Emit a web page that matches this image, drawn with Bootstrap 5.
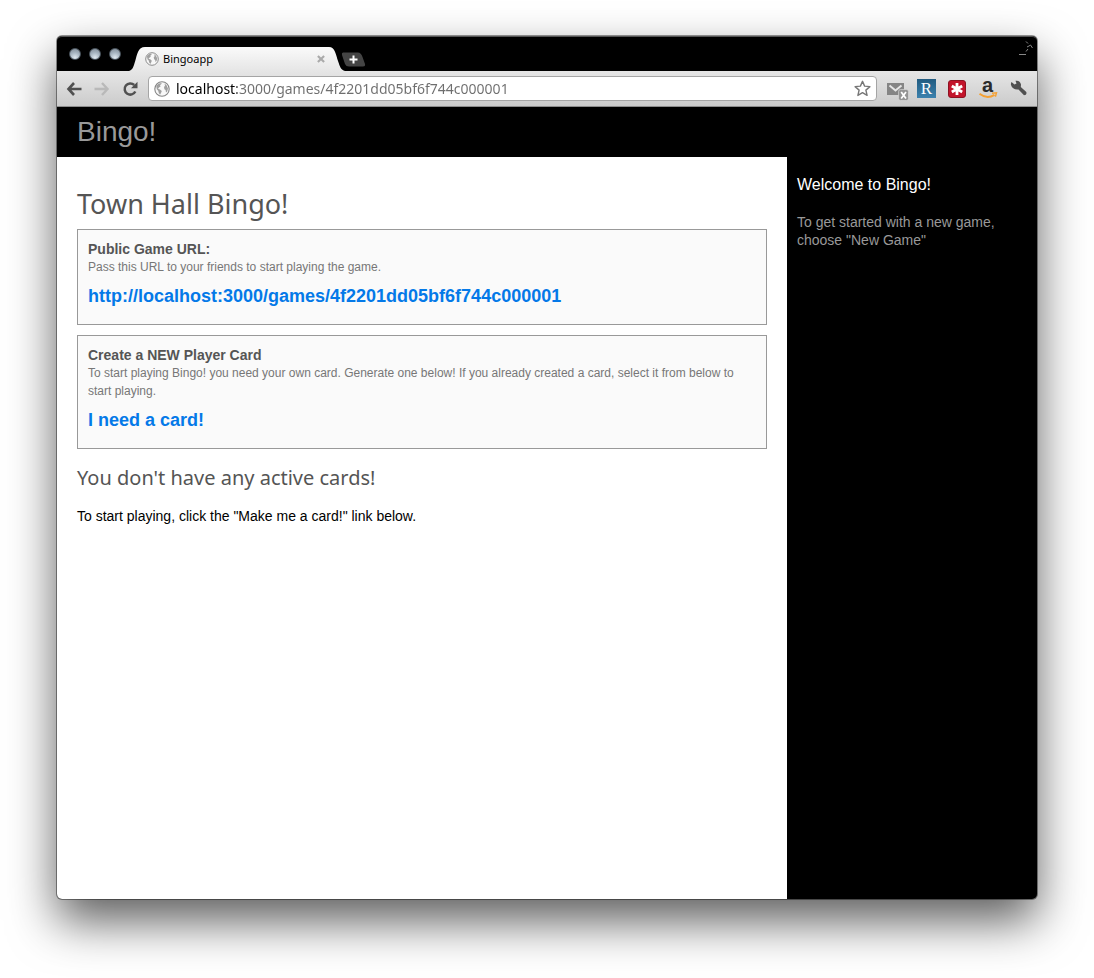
<!DOCTYPE html>
<html lang="en">
<head>
<meta charset="utf-8">
<meta name="viewport" content="width=device-width, initial-scale=1">
<title>Bingoapp</title>
<link rel="stylesheet" href="https://cdn.jsdelivr.net/npm/bootstrap@5.3.0/dist/css/bootstrap.min.css">
<style>
:root { --ui: "Noto Sans", "Open Sans", sans-serif; --helv: "Liberation Sans", Arial, sans-serif; }
body { font-family: var(--helv); font-size: 14px; line-height: 18px; color: #000; background: #fff; }
.desk { min-height: 100vh; padding: 36px 57px 79px; }
.app-window { border-radius: 5px; background: #000; box-shadow: 0 0 0 1px rgba(0,0,0,.4), 0 22px 48px rgba(0,0,0,.64); }

/* tab strip */
.tab-strip { height: 35px; background: #000; font-family: var(--ui); border-top: 1px solid #555; border-radius: 5px 5px 0 0; }
.light { width: 12px; height: 12px; border-radius: 50%; background: radial-gradient(circle at 50% 85%, #dfe9f0 0, #a6b4c0 50%, #7d8994 100%); border: 1px solid #4a545d; }
.tab-body { width: 180px; height: 24px; background: linear-gradient(#fafafa, #e6e6e6); font-size: 11px; line-height: 24px; }
.icon-btn { padding: 0; border: 0; background: none; display: flex; align-items: center; justify-content: center; }

/* toolbar */
.toolbar { height: 36px; background: linear-gradient(#e6e6e6, #cbcbcb); border-bottom: 1px solid #8c8c8c; padding: 0 9px; }
.address { height: 25px; border: 1px solid #a5a5a5; border-radius: 4px; background: #fff; padding: 0 5px; margin: 0 10px 0 9px; }
.address input { border: 0; outline: 0; padding: 0; margin-left: 6px; height: 21px; font-family: var(--ui); font-size: 14px;
  color: #6e6e6e; -webkit-text-fill-color: transparent; background: linear-gradient(90deg, #000 61px, #6e6e6e 61px); -webkit-background-clip: text; background-clip: text; }

/* page */
.masthead { height: 50px; padding: 0 20px; }
.masthead a { color: #999; font-size: 28px; line-height: 50px; }
.game { background: #fff; padding: 30px 20px; border-radius: 0 0 0 5px; }
.game h1, .game h2 { font-family: var(--ui); font-weight: 400; color: #555; margin: 0; }
.game h1 { font-size: 27px; line-height: 34px; margin-bottom: 8px; }
.game h2 { font-size: 20px; line-height: 30px; margin: 14px 0; }
.panel { background: #fafafa; border: 1px solid #999; padding: 10px 10px 18px; margin-bottom: 10px; }
.panel h3 { font-size: 14px; line-height: 18px; font-weight: 700; color: #555; margin: 0; }
.panel p { font-size: 12px; line-height: 18px; color: #777; margin: 0 0 10px; }
.panel a { font-size: 18px; line-height: 20px; font-weight: 700; color: #0479e8; display: block; }
.side { width: 250px; padding: 18px 10px; color: #999; }
.side h2 { font-size: 16px; line-height: 20px; color: #fff; margin: 0 0 18px; font-weight: 400; }
</style>
</head>
<body>
<div class="desk d-flex">
  <div class="app-window d-flex flex-column flex-grow-1">

    <div class="tab-strip d-flex align-items-end">
      <div class="d-flex gap-2 align-self-center ps-2 ms-1 me-2">
        <span class="light"></span><span class="light"></span><span class="light"></span>
      </div>
      <div class="d-flex">
        <svg width="16" height="24" viewBox="0 0 18 24" preserveAspectRatio="none"><defs><linearGradient id="tabfill" x1="0" y1="0" x2="0" y2="1"><stop stop-color="#fafafa"/><stop offset="1" stop-color="#e6e6e6"/></linearGradient></defs><path d="M0 24C4 23 5 20 7 14C9 8 10 0 18 0V24Z" fill="url(#tabfill)"/></svg>
        <div class="tab-body d-flex align-items-center">
          <svg class="flex-shrink-0 me-1" width="14" height="14" viewBox="0 0 16 16"><use href="#globe"/></svg>
          <span class="flex-grow-1">Bingoapp</span>
          <button class="icon-btn" type="button" aria-label="Close tab"><svg width="8" height="8" viewBox="0 0 9 9" stroke="#aaa" stroke-width="2.400"><path d="M1 1L8 8M8 1L1 8"/></svg></button>
        </div>
        <svg width="20" height="24" viewBox="0 0 20 24"><path d="M0 0H4C10 0 11 8 13 14C15 20 16 23 20 24H0Z" fill="url(#tabfill)"/></svg>
      </div>
      <button class="icon-btn mb-1" type="button" aria-label="New tab"><svg width="20" height="15" viewBox="4 0 20 15" overflow="visible"><path d="M2 .5H17Q20 .5 21.500 5L24 12Q24.500 14.500 22 14.500H8Q5 14.500 4 12L1 3Q.5 .5 2 .5Z" fill="#444"/><path d="M12.500 3.500V11.500M8.500 7.500H16.500" stroke="#fff" stroke-width="2"/></svg></button>
      <button class="icon-btn ms-auto align-self-start mt-1 me-1" type="button" aria-label="Full screen"><svg width="14" height="15" viewBox="0 0 14 15" fill="none" stroke="#888"><path d="M0 13.500H7M7 10.500L9 8M7 .5L9 2.500M8 6L10 5L11.500 4L13.500 7"/></svg></button>
    </div>

    <div class="toolbar d-flex align-items-center">
      <button class="icon-btn" type="button" aria-label="Back"><svg width="16" height="16" viewBox="0 0 16 16" fill="none" stroke="#505050" stroke-width="2.600"><path d="M8 2L2.500 8L8 14M3 8H15.500"/></svg></button>
      <button class="icon-btn ms-2 ps-1" type="button" aria-label="Forward"><svg width="16" height="16" viewBox="0 0 16 16" fill="none" stroke="#b9b9b9" stroke-width="2.400"><path d="M8 2L13.500 8L8 14M.5 8H13"/></svg></button>
      <button class="icon-btn ms-2 ps-1" type="button" aria-label="Reload"><svg width="17" height="16" viewBox="0 0 17 16"><path d="M12.200 4A5.600 5.600 0 1 0 13.300 10.500" fill="none" stroke="#505050" stroke-width="2.500"/><path d="M15.500 .8V7.200H9Z" fill="#505050"/></svg></button>
      <div class="address d-flex align-items-center flex-grow-1">
        <svg class="flex-shrink-0" width="16" height="16" viewBox="0 0 16 16"><g id="globe"><circle cx="8" cy="8" r="7.200" fill="#f8f8f8" stroke="#858585" stroke-width="1.100"/><path d="M2.200 4.500L5 2.400L7.800 2L7 3.600L6 4L6.600 5.400L5 6.600L4 7.800L6 8.400L7.800 10L7 12L6 13.800L4.800 12L4.200 9.800L2.800 8.200ZM10.500 2.400L12.600 4.200L14 7.400L13.200 10.400L12 11.400L11.600 9L10.400 8.200L10 6L11 4.800Z" fill="#a0a0a0"/></g></svg>
        <input class="flex-grow-1" type="text" aria-label="Address" value="localhost:3000/games/4f2201dd05bf6f744c000001">
        <button class="icon-btn" type="button" aria-label="Bookmark this page"><svg width="17" height="17" viewBox="0 0 17 16"><path d="M8.500 .8L10.600 5.600L15.900 6.100L11.900 9.600L13.100 14.900L8.500 12.200L3.900 14.900L5.100 9.600L1.100 6.100L6.400 5.600Z" fill="#fff" stroke="#777" stroke-width="1.400" stroke-linejoin="round"/></svg></button>
      </div>
      <div class="d-flex align-items-center gap-2">
        <button class="icon-btn pt-1" type="button" aria-label="Mail checker"><svg width="22" height="20" viewBox="0 0 22 20"><path d="M0 2H17V14H0Z" fill="#858585"/><path d="M2.500 4.500L8.500 9.500L14.500 4.500" fill="none" stroke="#e6e6e6" stroke-width="2"/><rect x="11.500" y="8.500" width="10" height="11" rx="2" fill="#949494" stroke="#ddd" stroke-width=".6"/><path d="M14.200 11L19 17.500M19 11L14.200 17.500" stroke="#fff" stroke-width="1.700"/></svg></button>
        <button class="icon-btn" type="button" aria-label="R extension"><svg width="19" height="19" viewBox="0 0 19 19"><defs><linearGradient id="rblue" x1="0" y1="0" x2="0" y2="1"><stop stop-color="#225b80"/><stop offset="1" stop-color="#3c82ae"/></linearGradient></defs><path d="M0 0H19V19H0Z" fill="url(#rblue)"/><text x="9.500" y="15" text-anchor="middle" font-family="Liberation Serif, serif" font-size="17" fill="#fff">R</text></svg></button>
        <button class="icon-btn ms-1" type="button" aria-label="LastPass"><svg width="18" height="18" viewBox="0 0 18 18"><rect x=".5" y=".5" width="17" height="17" rx="2.500" fill="#c3142b" stroke="#8c1322"/><path d="M9 3V15M3.800 6L14.200 12M14.200 6L3.800 12" stroke="#fff" stroke-width="2.800"/></svg></button>
        <button class="icon-btn ms-1" type="button" aria-label="Amazon"><svg width="20" height="32" viewBox="0 -7 20 32"><text x="9.500" y="12" text-anchor="middle" font-family="Liberation Sans, sans-serif" font-weight="700" font-size="20" fill="#2b2b2b">a</text><path d="M1.500 13.800Q9 19.500 16.500 14.800" fill="none" stroke="#f5a032" stroke-width="2"/><path d="M14 13.200L18.500 12.800L17.400 16.800" fill="none" stroke="#f5a032" stroke-width="1.400"/></svg></button>
        <button class="icon-btn ms-1" type="button" aria-label="Settings"><svg width="18" height="17" viewBox="0 0 18 17"><path d="M1.500 2L4.500 4.500L6.500 3.500L5.500 .8Q10 0 11 4.500L10.800 7L16.300 12Q17.300 15.200 14 15.200L8.500 9.400Q2.500 10 1 5Q.7 3.500 1.500 2Z" fill="#505050"/></svg></button>
      </div>
    </div>

    <header class="masthead"><a class="text-decoration-none" href="#">Bingo!</a></header>

    <div class="d-flex flex-grow-1">
      <main class="game flex-grow-1">
        <h1>Town Hall Bingo!</h1>
        <section class="panel">
          <h3>Public Game URL:</h3>
          <p>Pass this URL to your friends to start playing the game.</p>
          <a class="text-decoration-none" href="#">http://localhost:3000/games/4f2201dd05bf6f744c000001</a>
        </section>
        <section class="panel">
          <h3>Create a NEW Player Card</h3>
          <p>To start playing Bingo! you need your own card. Generate one below! If you already created a card, select it from below to start playing.</p>
          <a class="text-decoration-none" href="#">I need a card!</a>
        </section>
        <h2>You don't have any active cards!</h2>
        <p class="mb-0">To start playing, click the "Make me a card!" link below.</p>
      </main>
      <aside class="side flex-shrink-0">
        <h2>Welcome to Bingo!</h2>
        <p class="mb-0">To get started with a new game, choose "New Game"</p>
      </aside>
    </div>
  </div>
</div>
<script src="https://cdn.jsdelivr.net/npm/bootstrap@5.3.0/dist/js/bootstrap.bundle.min.js"></script>
</body>
</html>
